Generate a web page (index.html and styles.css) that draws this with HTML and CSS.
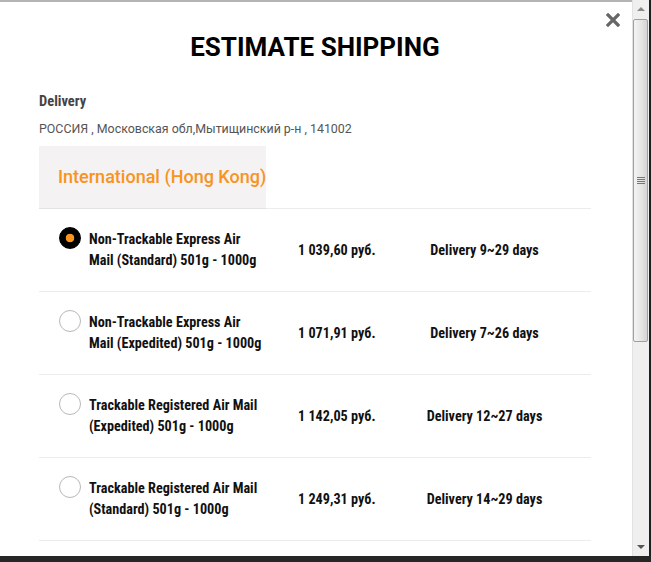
FILE: index.html
```html
<!DOCTYPE html>
<html>

<head>
    <title>Estimate Shipping</title>

    <link rel="stylesheet" href="styles.css">
</head>

<body>
    <div class="modal">
        <div class="modalBody">
            <svg class="close" width="14" height="14" viewBox="0 0 14 14">
                <path d="M2 2L12 12M12 2L2 12" stroke="#666" stroke-width="3.2" stroke-linecap="square" />
            </svg>

            <h1 class="title">ESTIMATE SHIPPING</h1>

            <div class="label">Delivery</div>
            <div class="address">РОССИЯ , Московская обл,Мытищинский р-н , 141002</div>

            <div class="tabs">
                <div class="tab">International (Hong Kong)</div>
            </div>

            <div class="row">
                <span class="radio checked"></span>
                <div class="name">Non-Trackable Express Air<br>Mail (Standard) 501g - 1000g</div>
                <div class="price">1 039,60 руб.</div>
                <div class="days">Delivery 9~29 days</div>
            </div>
            <div class="row">
                <span class="radio"></span>
                <div class="name">Non-Trackable Express Air<br>Mail (Expedited) 501g - 1000g</div>
                <div class="price">1 071,91 руб.</div>
                <div class="days">Delivery 7~26 days</div>
            </div>
            <div class="row">
                <span class="radio"></span>
                <div class="name">Trackable Registered Air Mail<br>(Expedited) 501g - 1000g</div>
                <div class="price">1 142,05 руб.</div>
                <div class="days">Delivery 12~27 days</div>
            </div>
            <div class="row">
                <span class="radio"></span>
                <div class="name">Trackable Registered Air Mail<br>(Standard) 501g - 1000g</div>
                <div class="price">1 249,31 руб.</div>
                <div class="days">Delivery 14~29 days</div>
            </div>
        </div>

        <!-- fake scrollbar of the popup -->
        <div class="scrollbar">
            <div class="arrow up"></div>
            <div class="thumb"><span class="grip"></span></div>
            <div class="track"></div>
            <div class="arrow down"></div>
        </div>
    </div>
    <div class="backdrop"></div>
</body>

</html>
```

FILE: styles.css
```css
body {
    margin: 0;
    background: #1f1f1f;
    font-family: Roboto, "Liberation Sans", sans-serif;
    width: 651px;
    height: 562px;
    overflow: hidden;
}

.modal {
    display: flex;
    width: 649px;
    height: 556px;
    background: #fff;
}

.modalBody {
    position: relative;
    flex: 1;
    border-top: 2px solid #b4b4b4;
    padding: 0 41px 0 39px;
    overflow: hidden;
}

.close {
    position: absolute;
    top: 11px;
    right: 12px;
}

.title {
    margin: 30px 0 0 0;
    font-size: 26px;
    font-weight: bold;
    color: #000;
    text-align: center;
    line-height: 30px;
}

.label {
    margin-top: 31px;
    font-family: Roboto, "Open Sans", sans-serif;
    font-stretch: 75%;
    font-size: 14.5px;
    font-weight: bold;
    color: #444;
}

.address {
    margin-top: 11px;
    font-size: 12.4px;
    color: #555;
}

.tabs {
    margin-top: 10px;
    border-bottom: 1px solid #ececec;
}

.tab {
    display: inline-block;
    vertical-align: top;
    width: 227px;
    height: 63px;
    line-height: 61px;
    box-sizing: border-box;
    padding-left: 19px;
    background: #f4f2f3;
    border-bottom: 1px solid #e2e2e2;
    margin-bottom: -1px;
    color: #f7941d;
    font-size: 18px;
    font-weight: 500;
    white-space: nowrap;
    overflow: hidden;
}

.row {
    display: flex;
    align-items: center;
    height: 82px;
    padding: 0 20px;
    border-bottom: 1px solid #ececec;
    font-family: Roboto, "Open Sans", sans-serif;
    font-stretch: 75%;
    font-weight: bold;
    font-size: 14.2px;
    color: #111;
}

.radio {
    align-self: flex-start;
    margin-top: 18px;
    width: 20px;
    height: 20px;
    border: 1px solid #b8b8b8;
    border-radius: 50%;
    box-sizing: content-box;
    flex: none;
}

.radio.checked {
    border-color: #000;
    background: radial-gradient(circle, #f7941d 0 4px, #000 4.6px);
}

.name {
    width: 190px;
    margin-left: 8px;
    line-height: 21px;
    white-space: nowrap;
}

.price {
    width: 100px;
    margin-left: 19px;
}

.days {
    flex: 1;
    text-align: center;
}

.scrollbar {
    display: flex;
    flex-direction: column;
    width: 16px;
    background: #efefef;
    border-left: 1px solid #e2e2e2;
}

.arrow {
    height: 17px;
    position: relative;
}

.arrow::after {
    content: "";
    position: absolute;
    left: 4px;
    border-left: 4px solid transparent;
    border-right: 4px solid transparent;
}

.arrow.up::after {
    top: 7px;
    border-bottom: 4px solid #888;
}

.arrow.down::after {
    top: 6px;
    border-top: 4px solid #555;
}

.thumb {
    height: 321px;
    margin: 2px 1px 0 0;
    border: 1px solid #a0a0a0;
    border-radius: 2px;
    background: linear-gradient(to right, #f4f4f4, #e4e4e4 60%, #d4d4d4);
    display: flex;
    align-items: center;
    justify-content: center;
}

.grip {
    width: 8px;
    height: 7px;
    background: repeating-linear-gradient(#777 0 1px, transparent 1px 2px);
}

.track {
    flex: 1;
}

.backdrop {
    height: 6px;
    background: #262626;
}
```
